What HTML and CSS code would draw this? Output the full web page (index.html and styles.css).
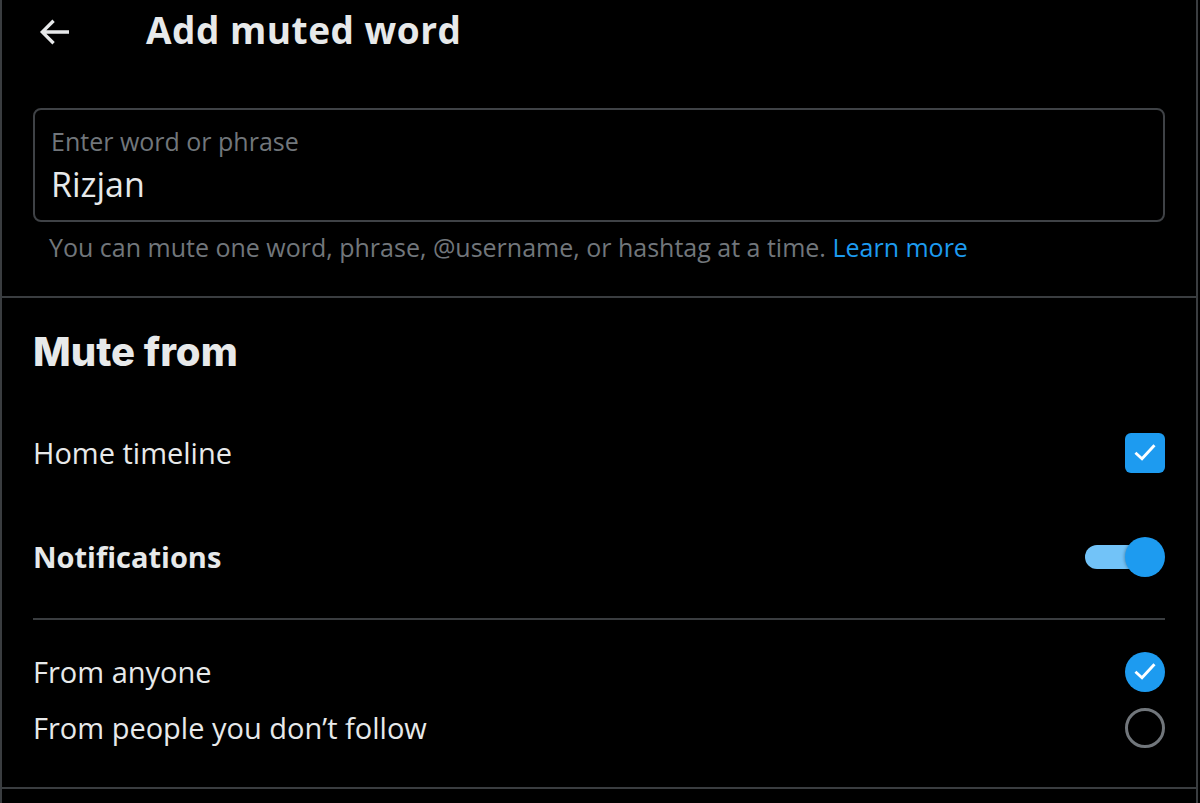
FILE: index.html
```html
<!DOCTYPE html>
<html lang="en">
<head>
<meta charset="utf-8">
<title>Add muted word</title>
<link rel="stylesheet" href="styles.css">
</head>
<body>
<div class="page">
  <header class="header">
    <svg class="back" viewBox="0 0 24 24" aria-hidden="true"><path d="M7.414 13l5.043 5.04-1.414 1.42L3.586 12l7.457-7.46 1.414 1.42L7.414 11H21v2H7.414z"/></svg>
    <h1 class="title">Add muted word</h1>
  </header>

  <section class="word-section">
    <div class="field">
      <div class="field-label">Enter word or phrase</div>
      <div class="field-value">Rizjan</div>
    </div>
    <p class="hint">You can mute one word, phrase, @username, or hashtag at a time. <a class="link">Learn more</a></p>
  </section>

  <section class="mute-section">
    <h2 class="heading">Mute from</h2>
    <div class="row">
      <span class="row-label">Home timeline</span>
      <span class="checkbox">
        <svg viewBox="0 0 24 24"><polyline points="5.2,12.6 9.6,16.6 18.8,6.6"/></svg>
      </span>
    </div>
    <div class="row">
      <span class="row-label bold">Notifications</span>
      <span class="toggle"><span class="track"></span><span class="knob"></span></span>
    </div>
    <div class="inner-divider"></div>
    <div class="radio-row">
      <span class="row-label">From anyone</span>
      <span class="radio checked">
        <svg viewBox="0 0 24 24"><polyline points="5.2,12.6 9.6,16.6 18.8,6.6"/></svg>
      </span>
    </div>
    <div class="radio-row">
      <span class="row-label">From people you don’t follow</span>
      <span class="radio"></span>
    </div>
  </section>
</div>
</body>
</html>
```

FILE: styles.css
```css
* { box-sizing: border-box; }
html, body {
  margin: 0;
  padding: 0;
  background: #000;
}
body {
  font-family: "Open Sans", "Liberation Sans", Arial, sans-serif;
  color: #e7e9ea;
  height: 803px;
  overflow: hidden;
}
.page {
  width: 1198px;
  height: 803px;
  border-left: 2px solid #3a3d40;
  border-right: 2px solid #3a3d40;
}
.header {
  display: flex;
  align-items: center;
  height: 60px;
  padding-left: 32px;
}
.back {
  width: 40px;
  height: 40px;
  fill: #e7e9ea;
  margin-top: 4px;
  flex-shrink: 0;
}
.title {
  margin: 0 0 0 72px;
  font-size: 37px;
  font-weight: 700;
  letter-spacing: 0.5px;
  line-height: 48px;
}
.word-section {
  padding: 48px 31px 33px 31px;
  border-bottom: 2px solid #3a3d40;
}
.field {
  height: 114px;
  border: 2px solid #3f4246;
  border-radius: 8px;
  padding: 16px 16px 0 16px;
}
.field-label {
  color: #71767b;
  font-size: 25px;
  line-height: 30px;
}
.field-value {
  font-size: 34px;
  line-height: 56px;
  color: #e7e9ea;
}
.hint {
  margin: 9px 0 0 0;
  padding-left: 16px;
  font-size: 25px;
  line-height: 32px;
  color: #71767b;
}
.link {
  color: #1d9bf0;
  text-decoration: none;
}
.mute-section {
  padding: 26px 31px 31px 31px;
  border-bottom: 2px solid #3a3d40;
}
.heading {
  margin: 0 0 21px 0;
  font-family: "Inter", "Open Sans", sans-serif;
  font-size: 40px;
  font-weight: 800;
  line-height: 56px;
}
.row {
  display: flex;
  align-items: center;
  justify-content: space-between;
  height: 104px;
}
.row-label {
  font-size: 29px;
  line-height: 40px;
}
.row-label.bold {
  font-weight: 700;
}
.checkbox {
  width: 40px;
  height: 40px;
  border-radius: 6px;
  background: #1d9bf0;
  display: flex;
  align-items: center;
  justify-content: center;
}
.checkbox svg, .radio svg {
  width: 30px;
  height: 30px;
  fill: none;
  stroke: #fff;
  stroke-width: 2.3;
  stroke-linecap: square;
}
.toggle {
  position: relative;
  width: 80px;
  height: 40px;
  display: block;
}
.track {
  position: absolute;
  left: 0;
  top: 8px;
  width: 76px;
  height: 24px;
  border-radius: 12px;
  background: #72c3f8;
}
.knob {
  position: absolute;
  right: 0;
  top: 0;
  width: 40px;
  height: 40px;
  border-radius: 50%;
  background: #1d9bf0;
  box-shadow: -1px 0 3px rgba(0, 0, 0, 0.25);
}
.inner-divider {
  height: 2px;
  background: #3a3d40;
  margin-top: 9px;
  margin-bottom: 24px;
}
.radio-row {
  display: flex;
  align-items: center;
  justify-content: space-between;
  height: 56px;
}
.radio {
  width: 40px;
  height: 40px;
  border-radius: 50%;
  border: 3px solid #71767b;
  display: flex;
  align-items: center;
  justify-content: center;
}
.radio.checked {
  border: none;
  background: #1d9bf0;
}
```
